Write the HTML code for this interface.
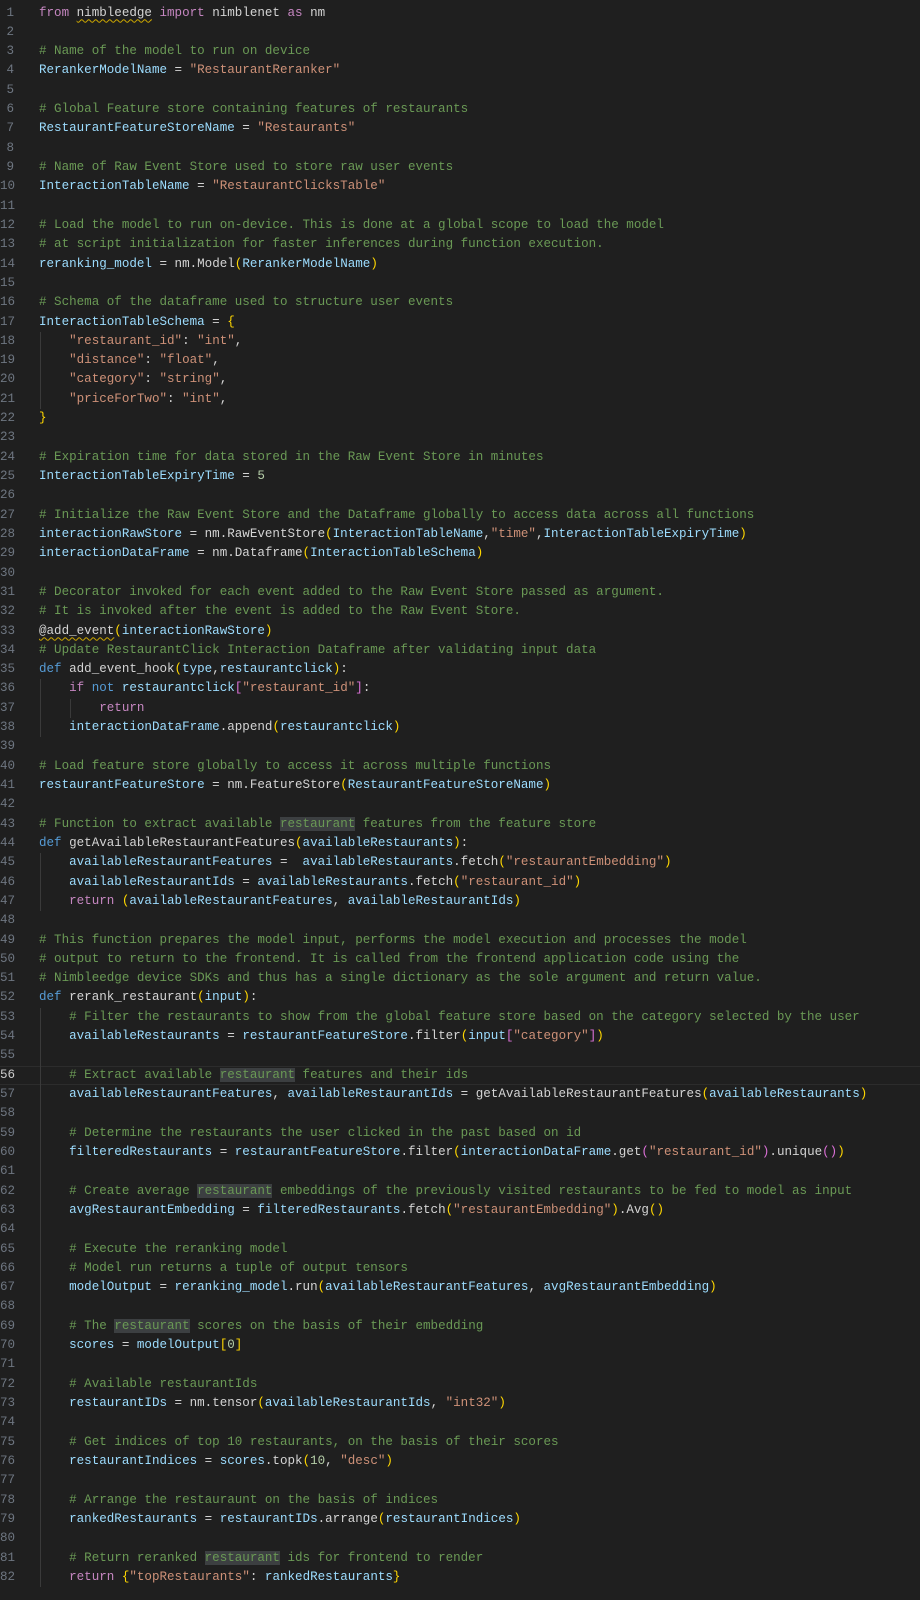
<!DOCTYPE html>
<html><head><meta charset="utf-8"><style>
html,body{margin:0;padding:0;background:#1f1f1f;width:920px;height:1600px;overflow:hidden}
body{font-family:"Liberation Mono","DejaVu Sans Mono",monospace;font-size:12.56px;color:#d4d4d4}
#w{position:relative;padding-top:3.5px}
.l{position:relative;height:19.32px;line-height:19.32px;white-space:pre}
.ln{position:absolute;left:0;width:14px;text-align:right;color:#6e7681}
.t{position:absolute;left:39px}
.cur{box-shadow:inset 0 1px 0 #2c2c2c,inset 0 -1px 0 #2c2c2c}
.cur .ln{color:#cccccc}
.g{position:absolute;top:0;bottom:0;width:1px;background:#3a3a3a}
.v{color:#9cdcfe}.s{color:#ce9178}.c{color:#6a9955}.k{color:#c586c0}.d{color:#569cd6}.n{color:#b5cea8}
.y{color:#ffd700}.p{color:#da70d6}.b{color:#179fff}
.h{background:#3c3f41}
.sq{text-decoration:underline wavy #cca700;text-underline-offset:3px;text-decoration-thickness:1px}
</style></head><body><div id="w">
<div class="l"><span class="ln">1</span><span class="t"><span class="k">from</span> <span class="sq">nimbleedge</span> <span class="k">import</span> nimblenet <span class="k">as</span> nm</span></div>
<div class="l"><span class="ln">2</span></div>
<div class="l"><span class="ln">3</span><span class="t c"># Name of the model to run on device</span></div>
<div class="l"><span class="ln">4</span><span class="t"><span class="v">RerankerModelName</span> = <span class="s">"RestaurantReranker"</span></span></div>
<div class="l"><span class="ln">5</span></div>
<div class="l"><span class="ln">6</span><span class="t c"># Global Feature store containing features of restaurants</span></div>
<div class="l"><span class="ln">7</span><span class="t"><span class="v">RestaurantFeatureStoreName</span> = <span class="s">"Restaurants"</span></span></div>
<div class="l"><span class="ln">8</span></div>
<div class="l"><span class="ln">9</span><span class="t c"># Name of Raw Event Store used to store raw user events</span></div>
<div class="l"><span class="ln">10</span><span class="t"><span class="v">InteractionTableName</span> = <span class="s">"RestaurantClicksTable"</span></span></div>
<div class="l"><span class="ln">11</span></div>
<div class="l"><span class="ln">12</span><span class="t c"># Load the model to run on-device. This is done at a global scope to load the model</span></div>
<div class="l"><span class="ln">13</span><span class="t c"># at script initialization for faster inferences during function execution.</span></div>
<div class="l"><span class="ln">14</span><span class="t"><span class="v">reranking_model</span> = nm.Model<span class="y">(</span><span class="v">RerankerModelName</span><span class="y">)</span></span></div>
<div class="l"><span class="ln">15</span></div>
<div class="l"><span class="ln">16</span><span class="t c"># Schema of the dataframe used to structure user events</span></div>
<div class="l"><span class="ln">17</span><span class="t"><span class="v">InteractionTableSchema</span> = <span class="y">{</span></span></div>
<div class="l"><span class="ln">18</span><span class="g" style="left:40px"></span><span class="t">    <span class="s">"restaurant_id"</span>: <span class="s">"int"</span>,</span></div>
<div class="l"><span class="ln">19</span><span class="g" style="left:40px"></span><span class="t">    <span class="s">"distance"</span>: <span class="s">"float"</span>,</span></div>
<div class="l"><span class="ln">20</span><span class="g" style="left:40px"></span><span class="t">    <span class="s">"category"</span>: <span class="s">"string"</span>,</span></div>
<div class="l"><span class="ln">21</span><span class="g" style="left:40px"></span><span class="t">    <span class="s">"priceForTwo"</span>: <span class="s">"int"</span>,</span></div>
<div class="l"><span class="ln">22</span><span class="t"><span class="y">}</span></span></div>
<div class="l"><span class="ln">23</span></div>
<div class="l"><span class="ln">24</span><span class="t c"># Expiration time for data stored in the Raw Event Store in minutes</span></div>
<div class="l"><span class="ln">25</span><span class="t"><span class="v">InteractionTableExpiryTime</span> = <span class="n">5</span></span></div>
<div class="l"><span class="ln">26</span></div>
<div class="l"><span class="ln">27</span><span class="t c"># Initialize the Raw Event Store and the Dataframe globally to access data across all functions</span></div>
<div class="l"><span class="ln">28</span><span class="t"><span class="v">interactionRawStore</span> = nm.RawEventStore<span class="y">(</span><span class="v">InteractionTableName</span>,<span class="s">"time"</span>,<span class="v">InteractionTableExpiryTime</span><span class="y">)</span></span></div>
<div class="l"><span class="ln">29</span><span class="t"><span class="v">interactionDataFrame</span> = nm.Dataframe<span class="y">(</span><span class="v">InteractionTableSchema</span><span class="y">)</span></span></div>
<div class="l"><span class="ln">30</span></div>
<div class="l"><span class="ln">31</span><span class="t c"># Decorator invoked for each event added to the Raw Event Store passed as argument.</span></div>
<div class="l"><span class="ln">32</span><span class="t c"># It is invoked after the event is added to the Raw Event Store.</span></div>
<div class="l"><span class="ln">33</span><span class="t"><span class="sq">@add_event</span><span class="y">(</span><span class="v">interactionRawStore</span><span class="y">)</span></span></div>
<div class="l"><span class="ln">34</span><span class="t c"># Update RestaurantClick Interaction Dataframe after validating input data</span></div>
<div class="l"><span class="ln">35</span><span class="t"><span class="d">def</span> add_event_hook<span class="y">(</span><span class="v">type</span>,<span class="v">restaurantclick</span><span class="y">)</span>:</span></div>
<div class="l"><span class="ln">36</span><span class="g" style="left:40px"></span><span class="t">    <span class="k">if</span> <span class="d">not</span> <span class="v">restaurantclick</span><span class="p">[</span><span class="s">"restaurant_id"</span><span class="p">]</span>:</span></div>
<div class="l"><span class="ln">37</span><span class="g" style="left:40px"></span><span class="g" style="left:70px"></span><span class="t">        <span class="k">return</span></span></div>
<div class="l"><span class="ln">38</span><span class="g" style="left:40px"></span><span class="t">    <span class="v">interactionDataFrame</span>.append<span class="y">(</span><span class="v">restaurantclick</span><span class="y">)</span></span></div>
<div class="l"><span class="ln">39</span></div>
<div class="l"><span class="ln">40</span><span class="t c"># Load feature store globally to access it across multiple functions</span></div>
<div class="l"><span class="ln">41</span><span class="t"><span class="v">restaurantFeatureStore</span> = nm.FeatureStore<span class="y">(</span><span class="v">RestaurantFeatureStoreName</span><span class="y">)</span></span></div>
<div class="l"><span class="ln">42</span></div>
<div class="l"><span class="ln">43</span><span class="t c"># Function to extract available <span class="h">restaurant</span> features from the feature store</span></div>
<div class="l"><span class="ln">44</span><span class="t"><span class="d">def</span> getAvailableRestaurantFeatures<span class="y">(</span><span class="v">availableRestaurants</span><span class="y">)</span>:</span></div>
<div class="l"><span class="ln">45</span><span class="g" style="left:40px"></span><span class="t">    <span class="v">availableRestaurantFeatures</span> =  <span class="v">availableRestaurants</span>.fetch<span class="y">(</span><span class="s">"restaurantEmbedding"</span><span class="y">)</span></span></div>
<div class="l"><span class="ln">46</span><span class="g" style="left:40px"></span><span class="t">    <span class="v">availableRestaurantIds</span> = <span class="v">availableRestaurants</span>.fetch<span class="y">(</span><span class="s">"restaurant_id"</span><span class="y">)</span></span></div>
<div class="l"><span class="ln">47</span><span class="g" style="left:40px"></span><span class="t">    <span class="k">return</span> <span class="y">(</span><span class="v">availableRestaurantFeatures</span>, <span class="v">availableRestaurantIds</span><span class="y">)</span></span></div>
<div class="l"><span class="ln">48</span></div>
<div class="l"><span class="ln">49</span><span class="t c"># This function prepares the model input, performs the model execution and processes the model</span></div>
<div class="l"><span class="ln">50</span><span class="t c"># output to return to the frontend. It is called from the frontend application code using the</span></div>
<div class="l"><span class="ln">51</span><span class="t c"># Nimbleedge device SDKs and thus has a single dictionary as the sole argument and return value.</span></div>
<div class="l"><span class="ln">52</span><span class="t"><span class="d">def</span> rerank_restaurant<span class="y">(</span><span class="v">input</span><span class="y">)</span>:</span></div>
<div class="l"><span class="ln">53</span><span class="g" style="left:40px"></span><span class="t">    <span class="c"># Filter the restaurants to show from the global feature store based on the category selected by the user</span></span></div>
<div class="l"><span class="ln">54</span><span class="g" style="left:40px"></span><span class="t">    <span class="v">availableRestaurants</span> = <span class="v">restaurantFeatureStore</span>.filter<span class="y">(</span><span class="v">input</span><span class="p">[</span><span class="s">"category"</span><span class="p">]</span><span class="y">)</span></span></div>
<div class="l"><span class="ln">55</span><span class="g" style="left:40px"></span></div>
<div class="l cur"><span class="ln">56</span><span class="g" style="left:40px"></span><span class="t">    <span class="c"># Extract available <span class="h">restaurant</span> features and their ids</span></span></div>
<div class="l"><span class="ln">57</span><span class="g" style="left:40px"></span><span class="t">    <span class="v">availableRestaurantFeatures</span>, <span class="v">availableRestaurantIds</span> = getAvailableRestaurantFeatures<span class="y">(</span><span class="v">availableRestaurants</span><span class="y">)</span></span></div>
<div class="l"><span class="ln">58</span><span class="g" style="left:40px"></span></div>
<div class="l"><span class="ln">59</span><span class="g" style="left:40px"></span><span class="t">    <span class="c"># Determine the restaurants the user clicked in the past based on id</span></span></div>
<div class="l"><span class="ln">60</span><span class="g" style="left:40px"></span><span class="t">    <span class="v">filteredRestaurants</span> = <span class="v">restaurantFeatureStore</span>.filter<span class="y">(</span><span class="v">interactionDataFrame</span>.get<span class="p">(</span><span class="s">"restaurant_id"</span><span class="p">)</span>.unique<span class="p">()</span><span class="y">)</span></span></div>
<div class="l"><span class="ln">61</span><span class="g" style="left:40px"></span></div>
<div class="l"><span class="ln">62</span><span class="g" style="left:40px"></span><span class="t">    <span class="c"># Create average <span class="h">restaurant</span> embeddings of the previously visited restaurants to be fed to model as input</span></span></div>
<div class="l"><span class="ln">63</span><span class="g" style="left:40px"></span><span class="t">    <span class="v">avgRestaurantEmbedding</span> = <span class="v">filteredRestaurants</span>.fetch<span class="y">(</span><span class="s">"restaurantEmbedding"</span><span class="y">)</span>.Avg<span class="y">()</span></span></div>
<div class="l"><span class="ln">64</span><span class="g" style="left:40px"></span></div>
<div class="l"><span class="ln">65</span><span class="g" style="left:40px"></span><span class="t">    <span class="c"># Execute the reranking model</span></span></div>
<div class="l"><span class="ln">66</span><span class="g" style="left:40px"></span><span class="t">    <span class="c"># Model run returns a tuple of output tensors</span></span></div>
<div class="l"><span class="ln">67</span><span class="g" style="left:40px"></span><span class="t">    <span class="v">modelOutput</span> = <span class="v">reranking_model</span>.run<span class="y">(</span><span class="v">availableRestaurantFeatures</span>, <span class="v">avgRestaurantEmbedding</span><span class="y">)</span></span></div>
<div class="l"><span class="ln">68</span><span class="g" style="left:40px"></span></div>
<div class="l"><span class="ln">69</span><span class="g" style="left:40px"></span><span class="t">    <span class="c"># The <span class="h">restaurant</span> scores on the basis of their embedding</span></span></div>
<div class="l"><span class="ln">70</span><span class="g" style="left:40px"></span><span class="t">    <span class="v">scores</span> = <span class="v">modelOutput</span><span class="y">[</span><span class="n">0</span><span class="y">]</span></span></div>
<div class="l"><span class="ln">71</span><span class="g" style="left:40px"></span></div>
<div class="l"><span class="ln">72</span><span class="g" style="left:40px"></span><span class="t">    <span class="c"># Available restaurantIds</span></span></div>
<div class="l"><span class="ln">73</span><span class="g" style="left:40px"></span><span class="t">    <span class="v">restaurantIDs</span> = nm.tensor<span class="y">(</span><span class="v">availableRestaurantIds</span>, <span class="s">"int32"</span><span class="y">)</span></span></div>
<div class="l"><span class="ln">74</span><span class="g" style="left:40px"></span></div>
<div class="l"><span class="ln">75</span><span class="g" style="left:40px"></span><span class="t">    <span class="c"># Get indices of top 10 restaurants, on the basis of their scores</span></span></div>
<div class="l"><span class="ln">76</span><span class="g" style="left:40px"></span><span class="t">    <span class="v">restaurantIndices</span> = <span class="v">scores</span>.topk<span class="y">(</span><span class="n">10</span>, <span class="s">"desc"</span><span class="y">)</span></span></div>
<div class="l"><span class="ln">77</span><span class="g" style="left:40px"></span></div>
<div class="l"><span class="ln">78</span><span class="g" style="left:40px"></span><span class="t">    <span class="c"># Arrange the restauraunt on the basis of indices</span></span></div>
<div class="l"><span class="ln">79</span><span class="g" style="left:40px"></span><span class="t">    <span class="v">rankedRestaurants</span> = <span class="v">restaurantIDs</span>.arrange<span class="y">(</span><span class="v">restaurantIndices</span><span class="y">)</span></span></div>
<div class="l"><span class="ln">80</span><span class="g" style="left:40px"></span></div>
<div class="l"><span class="ln">81</span><span class="g" style="left:40px"></span><span class="t">    <span class="c"># Return reranked <span class="h">restaurant</span> ids for frontend to render</span></span></div>
<div class="l"><span class="ln">82</span><span class="g" style="left:40px"></span><span class="t">    <span class="k">return</span> <span class="y">{</span><span class="s">"topRestaurants"</span>: <span class="v">rankedRestaurants</span><span class="y">}</span></span></div>
</div></body></html>
